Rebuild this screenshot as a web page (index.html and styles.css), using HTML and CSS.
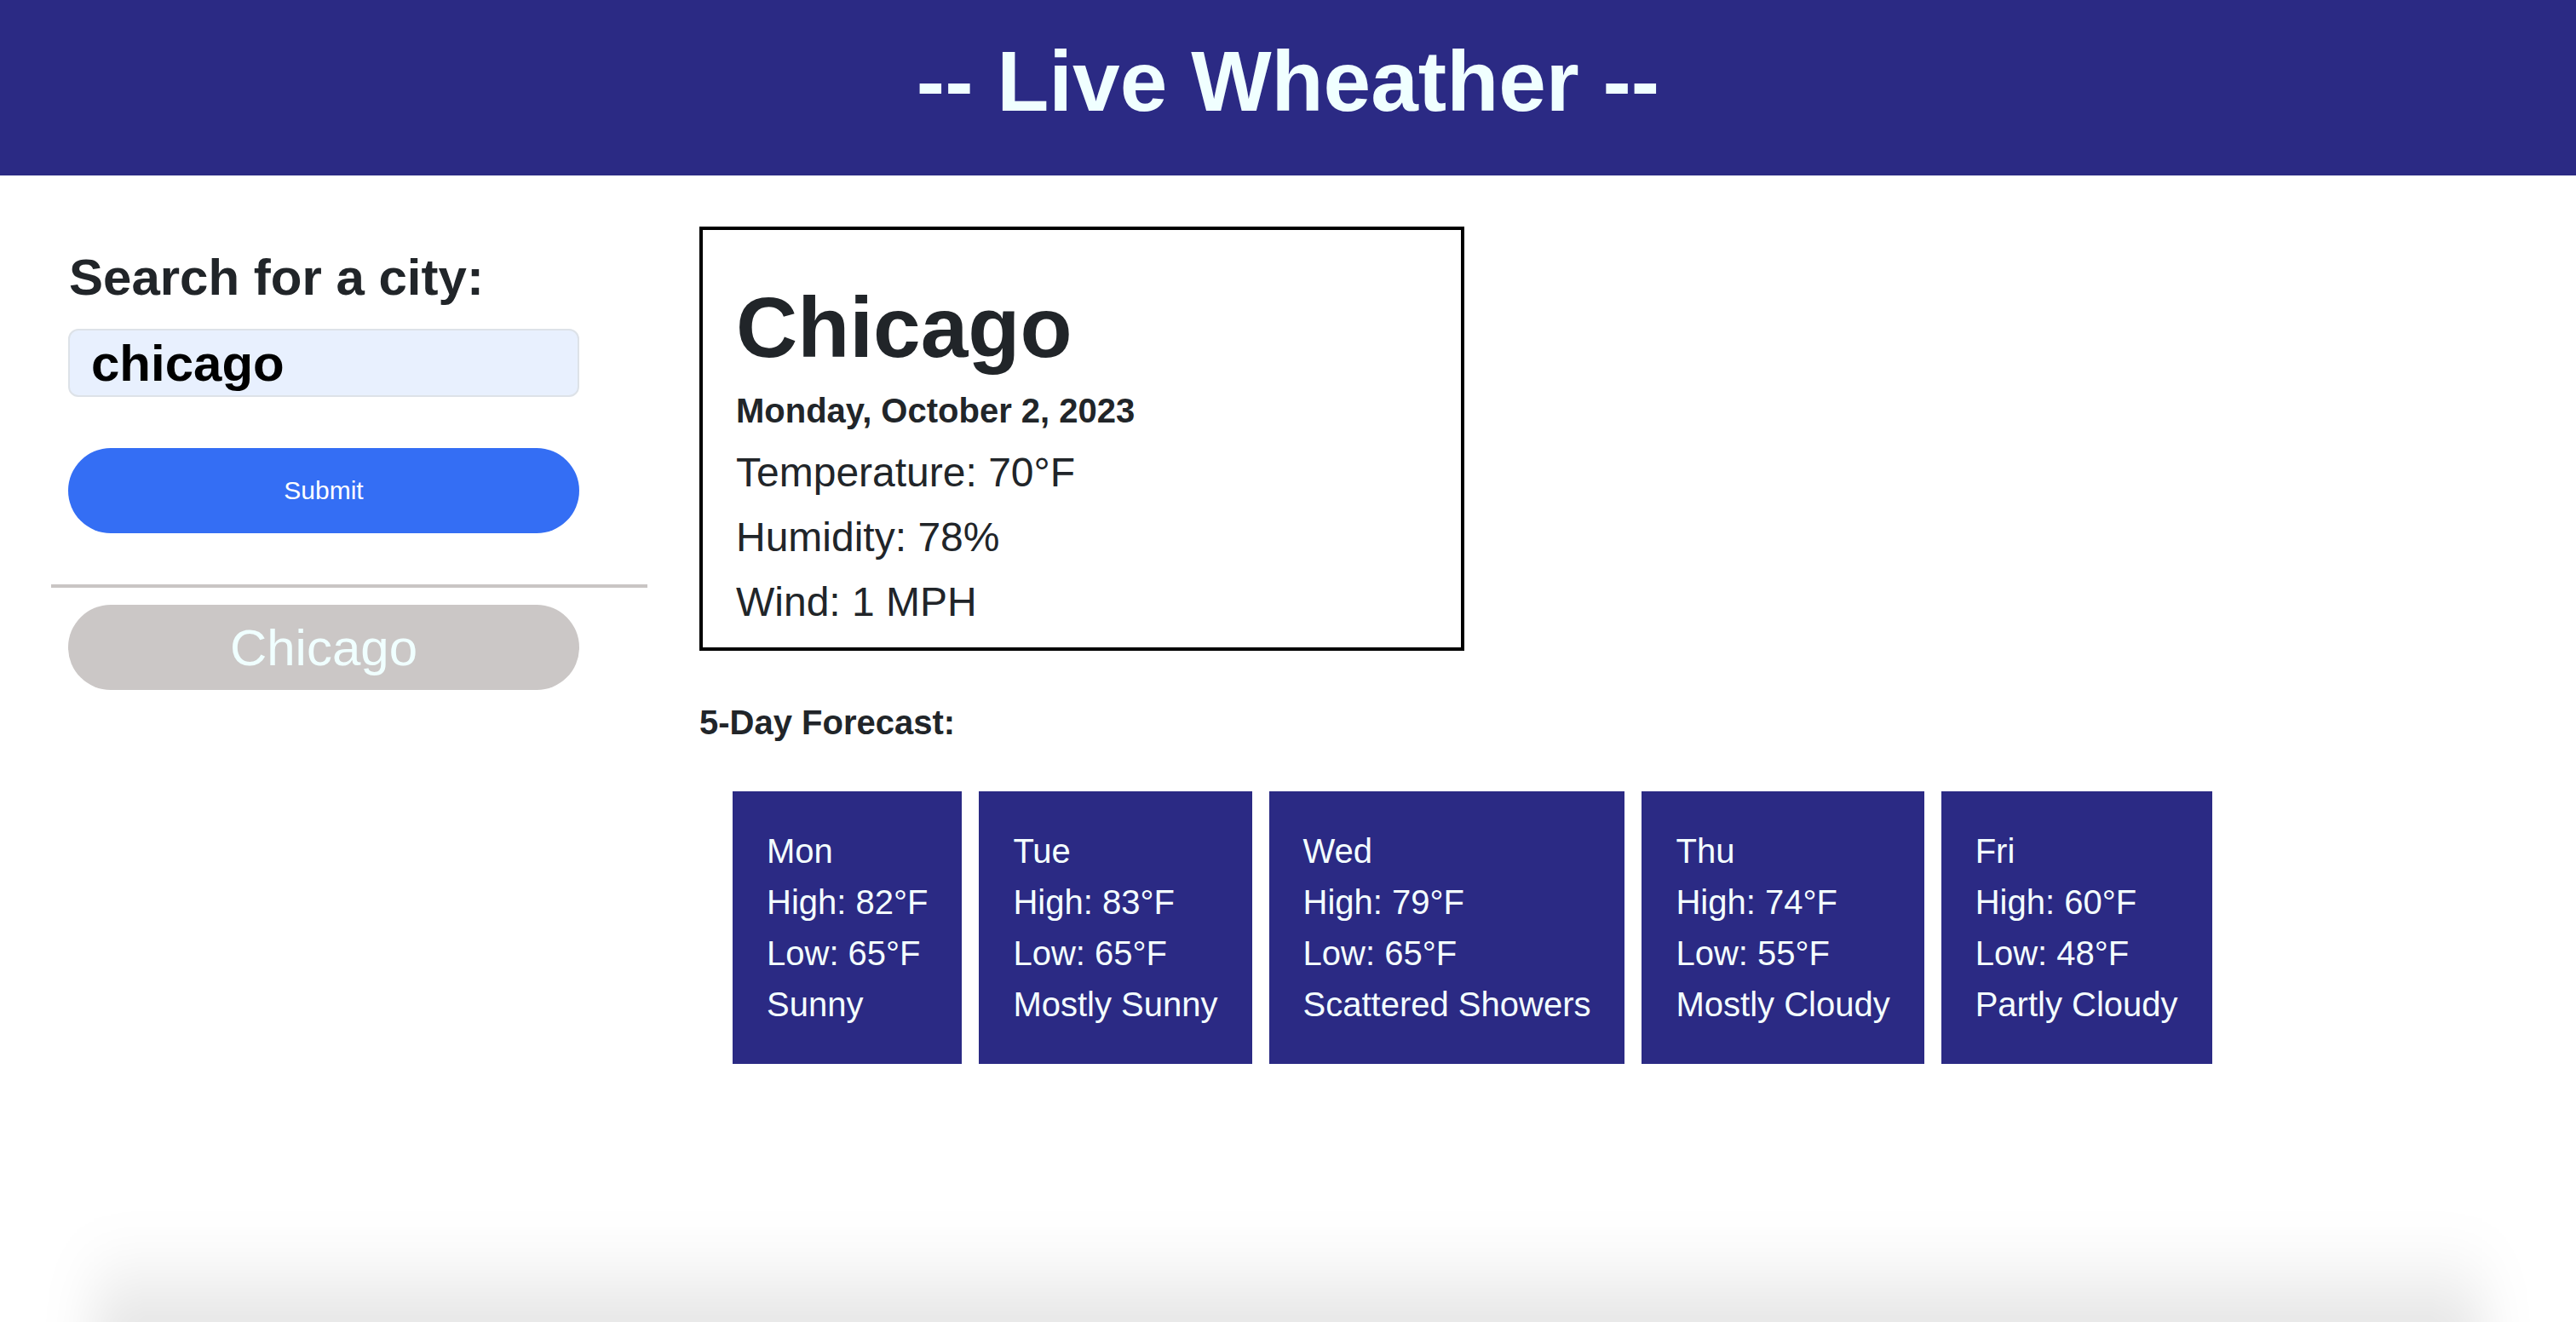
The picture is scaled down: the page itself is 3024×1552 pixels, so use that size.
FILE: index.html
```html
<!DOCTYPE html>
<html lang="en">
<head>
<meta charset="utf-8">
<title>Live Wheather</title>
<link rel="stylesheet" href="styles.css">
</head>
<body>
<header class="topbar">
  <h1 class="title">-- Live Wheather --</h1>
</header>
<div class="layout">
  <aside class="sidebar">
    <h2 class="search-label">Search for a city:</h2>
    <input class="city-input" type="text" value="chicago">
    <button class="submit-btn" type="button">Submit</button>
    <hr class="divider">
    <button class="history-btn" type="button">Chicago</button>
  </aside>
  <main class="content">
    <section class="current">
      <h2 class="city-name">Chicago</h2>
      <p class="date">Monday, October 2, 2023</p>
      <p class="stat">Temperature: 70°F</p>
      <p class="stat">Humidity: 78%</p>
      <p class="stat">Wind: 1 MPH</p>
    </section>
    <h3 class="forecast-title">5-Day Forecast:</h3>
    <div class="forecast">
      <div class="day"><p>Mon</p><p>High: 82°F</p><p>Low: 65°F</p><p>Sunny</p></div>
      <div class="day"><p>Tue</p><p>High: 83°F</p><p>Low: 65°F</p><p>Mostly Sunny</p></div>
      <div class="day"><p>Wed</p><p>High: 79°F</p><p>Low: 65°F</p><p>Scattered Showers</p></div>
      <div class="day"><p>Thu</p><p>High: 74°F</p><p>Low: 55°F</p><p>Mostly Cloudy</p></div>
      <div class="day"><p>Fri</p><p>High: 60°F</p><p>Low: 48°F</p><p>Partly Cloudy</p></div>
    </div>
  </main>
</div>
<div class="shade"></div>
</body>
</html>
```
FILE: styles.css
```css
* { box-sizing: border-box; }
html, body { margin: 0; padding: 0; background: #ffffff; }
body {
  font-family: "Liberation Sans", Arial, Helvetica, sans-serif;
  color: #212529;
  overflow: hidden;
  height: 1552px;
}
.topbar {
  background: #2b2a84;
  height: 206px;
  padding: 35px 0 51px;
}
.title {
  margin: 0;
  text-align: center;
  font-size: 100px;
  line-height: 120px;
  font-weight: 700;
  color: #f0ffff;
}
.layout {
  display: flex;
  align-items: flex-start;
  gap: 61px;
  padding-left: 60px;
}
.sidebar {
  width: 700px;
  padding-top: 84px;
  display: flex;
  flex-direction: column;
  align-items: flex-start;
}
.search-label {
  margin: 0 0 24px 21px;
  font-size: 60px;
  line-height: 72px;
  font-weight: 700;
}
.city-input {
  margin: 0 0 60px 20px;
  width: 600px;
  height: 80px;
  border: 2px solid #dde2e8;
  border-radius: 12px;
  background: #e8f0fe;
  padding: 0 25px;
  font-family: inherit;
  font-size: 60px;
  font-weight: 700;
  color: #000;
  outline: none;
}
.submit-btn {
  margin: 0 0 60px 20px;
  width: 600px;
  height: 100px;
  border: 0;
  border-radius: 50px;
  background: #346ef4;
  color: #ffffff;
  font-family: inherit;
  font-size: 30px;
  padding: 0;
}
.divider {
  margin: 0 0 20px 0;
  width: 700px;
  height: 4px;
  border: 0;
  background: #c9c5c4;
}
.history-btn {
  margin: 0 0 0 20px;
  width: 600px;
  height: 100px;
  border: 0;
  border-radius: 50px;
  background: #cbc7c6;
  color: #f0ffff;
  font-family: inherit;
  font-size: 60px;
  padding: 0;
}
.content {
  padding-top: 60px;
}
.current {
  width: 898px;
  border: 4px solid #000;
  padding: 51px 40px 15px 39px;
}
.city-name {
  margin: 0;
  font-size: 100px;
  line-height: 126px;
  font-weight: 700;
}
.date {
  margin: 0;
  font-size: 40px;
  line-height: 70px;
  font-weight: 700;
}
.stat {
  margin: 0;
  font-size: 48px;
  line-height: 76px;
}
.forecast-title {
  margin: 54px 0 0;
  font-size: 40px;
  line-height: 60px;
  font-weight: 700;
}
.forecast {
  display: flex;
  gap: 20px;
  margin: 51px 0 0 39px;
}
.day {
  background: #2b2a84;
  color: #f4ffff;
  padding: 40px;
  height: 320px;
}
.day p {
  margin: 0;
  font-size: 40px;
  line-height: 60px;
  white-space: nowrap;
}
.shade {
  position: fixed;
  left: 110px;
  right: 110px;
  bottom: -50px;
  height: 150px;
  background: linear-gradient(to bottom, rgba(0,0,0,0), rgba(0,0,0,0.14));
  filter: blur(30px);
  pointer-events: none;
}
```
